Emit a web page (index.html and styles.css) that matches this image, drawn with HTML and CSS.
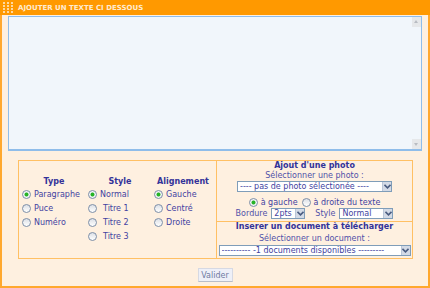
FILE: index.html
```html
<!DOCTYPE html>
<html lang="fr">
<head>
  <meta charset="UTF-8">
  <title>Ajouter un texte</title>
  <link rel="stylesheet" href="styles.css">
</head>
<body>
  <div class="box">
    <div class="box-head">
      <svg class="grip" width="10" height="11" viewBox="0 0 10 11">
        <g fill="#FFD8A0">
          <rect x="0" y="0" width="2" height="2"/><rect x="4" y="0" width="2" height="2"/><rect x="8" y="0" width="2" height="2"/>
          <rect x="0" y="3" width="2" height="2"/><rect x="4" y="3" width="2" height="2"/><rect x="8" y="3" width="2" height="2"/>
          <rect x="0" y="6" width="2" height="2"/><rect x="4" y="6" width="2" height="2"/><rect x="8" y="6" width="2" height="2"/>
          <rect x="0" y="9" width="2" height="2"/><rect x="4" y="9" width="2" height="2"/><rect x="8" y="9" width="2" height="2"/>
        </g>
      </svg>
      <span>AJOUTER UN TEXTE CI DESSOUS</span>
    </div>

    <div class="box-body">
      <div class="editor">
        <textarea id="texte"></textarea>
        <span class="sb sb-up"></span>
        <span class="sb sb-down"></span>
      </div>

      <div class="options">
        <div class="format">
          <div class="col col-type">
            <div class="col-title">Type</div>
            <label><input type="radio" name="type" checked>Paragraphe</label>
            <label><input type="radio" name="type">Puce</label>
            <label><input type="radio" name="type">Numéro</label>
          </div>
          <div class="col col-style">
            <div class="col-title">Style</div>
            <label><input type="radio" name="style" checked>Normal</label>
            <label class="indent"><input type="radio" name="style">Titre 1</label>
            <label class="indent"><input type="radio" name="style">Titre 2</label>
            <label class="indent"><input type="radio" name="style">Titre 3</label>
          </div>
          <div class="col col-align">
            <div class="col-title">Alignement</div>
            <label><input type="radio" name="align" checked>Gauche</label>
            <label><input type="radio" name="align">Centré</label>
            <label><input type="radio" name="align">Droite</label>
          </div>
        </div>

        <div class="media">
          <div class="photo">
            <div class="media-title">Ajout d'une photo</div>
            <div class="hint">Sélectionner une photo :</div>
            <div class="row">
              <span class="select w-photo">
                <select><option>---- pas de photo sélectionée ----</option></select>
                <span class="select-btn"><svg width="7" height="5" viewBox="0 0 7 5"><path d="M0.5 0.8 L3.5 3.8 L6.5 0.8" fill="none" stroke="#4A5C80" stroke-width="1.6"/></svg></span>
              </span>
            </div>
            <div class="row radio-row">
              <label><input type="radio" name="pos" checked>à gauche</label>
              <label><input type="radio" name="pos">à droite du texte</label>
            </div>
            <div class="row bordure-row">
              <span class="lbl">Bordure</span>
              <span class="select w-bord">
                <select><option>2pts</option></select>
                <span class="select-btn"><svg width="7" height="5" viewBox="0 0 7 5"><path d="M0.5 0.8 L3.5 3.8 L6.5 0.8" fill="none" stroke="#4A5C80" stroke-width="1.6"/></svg></span>
              </span>
              <span class="lbl lbl-style">Style</span>
              <span class="select w-style">
                <select><option>Normal</option></select>
                <span class="select-btn"><svg width="7" height="5" viewBox="0 0 7 5"><path d="M0.5 0.8 L3.5 3.8 L6.5 0.8" fill="none" stroke="#4A5C80" stroke-width="1.6"/></svg></span>
              </span>
            </div>
          </div>
          <div class="doc">
            <div class="media-title">Inserer un document à télécharger</div>
            <div class="hint hint-doc">Sélectionner un document :</div>
            <div class="row row-doc">
              <span class="select w-doc">
                <select><option>---------- -1 documents disponibles ---------</option></select>
                <span class="select-btn"><svg width="7" height="5" viewBox="0 0 7 5"><path d="M0.5 0.8 L3.5 3.8 L6.5 0.8" fill="none" stroke="#4A5C80" stroke-width="1.6"/></svg></span>
              </span>
            </div>
          </div>
        </div>
      </div>

      <div class="actions">
        <button type="button">Valider</button>
      </div>
    </div>
  </div>
</body>
</html>
```

FILE: styles.css
```css
body {
  margin: 0;
  font-family: "DejaVu Sans", Verdana, sans-serif;
  background: #fff;
}

.box {
  width: 430px;
  height: 288px;
  display: flex;
  flex-direction: column;
}

.box-head {
  height: 15px;
  background: #FF9900;
  display: flex;
  align-items: center;
  padding-left: 3px;
  gap: 5px;
  color: #FFEBD0;
  font-size: 7px;
  font-weight: bold;
}

.box-body {
  flex: 1;
  background: #FEF0E0;
  border: 2px solid #FFA82E;
  border-top: 0;
  padding: 1px 6px 0 6px;
}

.editor {
  position: relative;
  width: 414px;
  height: 135px;
}

.editor textarea {
  display: block;
  width: 100%;
  height: 100%;
  box-sizing: border-box;
  margin: 0;
  border: 1px solid #8FBDEA;
  border-bottom-width: 2px;
  background: #F1F6FB;
  resize: none;
}

.sb {
  position: absolute;
  left: 404px;
  width: 9px;
  height: 10px;
  background: #E6E8EA;
}

.sb-up { top: 1px; }
.sb-down { top: 123px; }

.sb::after {
  content: "";
  position: absolute;
  left: 2px;
  border-left: 2.5px solid transparent;
  border-right: 2.5px solid transparent;
}

.sb-up::after {
  top: 3px;
  border-bottom: 3px solid #B8BCC2;
}

.sb-down::after {
  top: 4px;
  border-top: 3px solid #B8BCC2;
}

.options {
  display: flex;
  width: 395px;
  height: 99px;
  box-sizing: border-box;
  margin: 9px 0 0 10px;
  border: 1px solid #FFC064;
}

.format {
  width: 197px;
  display: flex;
  padding: 15px 0 0 2px;
  box-sizing: border-box;
}

.col {
  display: flex;
  flex-direction: column;
}

.col-type { width: 66px; }
.col-style { width: 66px; }
.col-align { width: 60px; }

.col-title {
  text-align: center;
  font-weight: bold;
  font-size: 8px;
  line-height: 11px;
  color: #333399;
}

.col label {
  display: flex;
  align-items: center;
  height: 14px;
  font-size: 8px;
  color: #4242A0;
  white-space: nowrap;
}

.col label.indent input {
  margin-right: 6px;
}

input[type="radio"] {
  appearance: none;
  -webkit-appearance: none;
  width: 9px;
  height: 9px;
  margin: 0 3px 0 1px;
  border: 1px solid #7D8FA8;
  border-radius: 50%;
  box-sizing: border-box;
  background: linear-gradient(#DCE0E6, #FFFFFF);
}

input[type="radio"]:checked {
  background: radial-gradient(circle, #26B326 0, #26B326 1.6px, #F3F5F8 2.4px);
}

.media {
  flex: 1;
  border-left: 1px solid #FFC064;
  display: flex;
  flex-direction: column;
  text-align: center;
  color: #4242A0;
  font-size: 8px;
}

.photo {
  height: 60px;
}

.doc {
  flex: 1;
  border-top: 1px solid #FFC064;
}

.media-title {
  font-weight: bold;
  color: #333399;
  line-height: 10px;
  white-space: nowrap;
}

.hint {
  line-height: 9px;
  color: #5050A8;
}

.hint-doc {
  margin-top: 2px;
}

.row {
  display: flex;
  justify-content: center;
  align-items: center;
  margin-top: 1px;
}

.row-doc {
  margin-top: 2px;
}

.radio-row {
  margin-top: 5px;
  height: 10px;
}

.radio-row label {
  display: flex;
  align-items: center;
  margin: 0 2px;
}

.radio-row input {
  margin: 0 3px 0 0;
}

.bordure-row {
  height: 11px;
}

.lbl {
  margin-right: 4px;
  color: #5050A8;
}

.lbl-style {
  margin-left: 10px;
}

.select {
  display: inline-flex;
  height: 11px;
  box-sizing: border-box;
  border: 1px solid #7F9DB9;
  background: #fff;
}

.select select {
  appearance: none;
  -webkit-appearance: none;
  flex: 1;
  min-width: 0;
  height: 9px;
  border: 0;
  padding: 0 2px;
  margin: 0;
  background: #fff;
  font-family: "DejaVu Sans", Verdana, sans-serif;
  font-size: 8px;
  line-height: 9px;
  color: #4242A0;
}

.select-btn {
  width: 9px;
  height: 9px;
  display: flex;
  align-items: center;
  justify-content: center;
  background: #D3DAE6;
  border-left: 1px solid #BAC6D8;
  box-sizing: border-box;
}

.w-photo { width: 155px; }
.w-bord { width: 34px; }
.w-style { width: 54px; }
.w-doc { width: 192px; }

.actions {
  display: flex;
  justify-content: center;
  margin-top: 9px;
}

.actions button {
  width: 35px;
  height: 14px;
  padding: 0;
  border: 1px solid #D6D9E3;
  border-bottom-color: #B9BDC9;
  background: #EEF0F8;
  font-family: "DejaVu Sans", Verdana, sans-serif;
  font-size: 8px;
  color: #6E7BA2;
}
```
